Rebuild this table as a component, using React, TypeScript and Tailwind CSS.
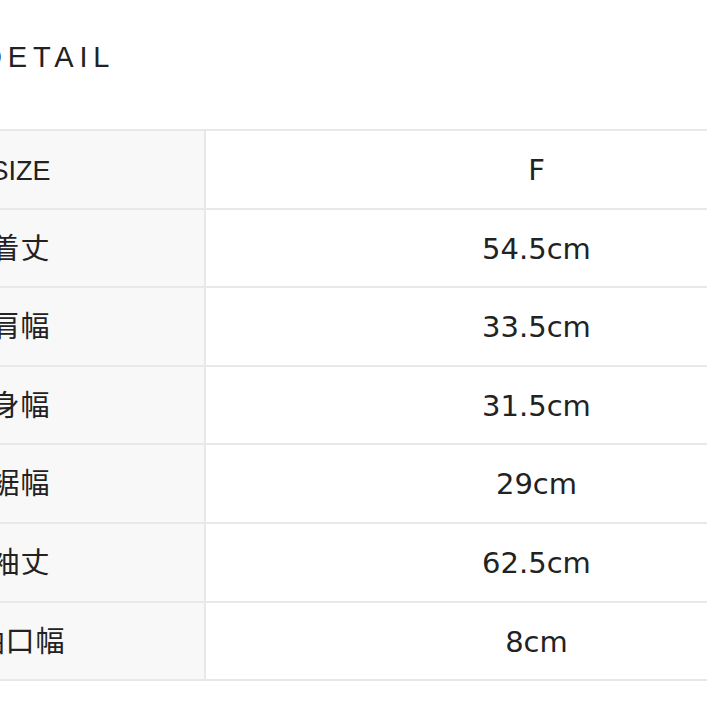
const rows: { label: string; value: string }[] = [
  { label: "SIZE", value: "F" },
  { label: "着丈", value: "54.5cm" },
  { label: "肩幅", value: "33.5cm" },
  { label: "身幅", value: "31.5cm" },
  { label: "裾幅", value: "29cm" },
  { label: "袖丈", value: "62.5cm" },
  { label: "袖口幅", value: "8cm" },
]

export default function App() {
  return (
    <div className="w-[707px] h-[707px] overflow-hidden bg-white text-[#222] font-['Liberation_Sans','Noto_Sans_CJK_JP',sans-serif]">
      <h2 className="pt-[43px] ml-[-19px] text-[29px] leading-none tracking-[0.2em] font-normal whitespace-nowrap">
        DETAIL
      </h2>

      <div className="mt-[57px] ml-[-163px] w-[1030px] border-t-2 border-[#e8e8e8]">
        {rows.map((row, i) => (
          <div key={row.label} className="flex h-[78.6px] border-b-2 border-[#e8e8e8]">
            <div
              className={
                i === 0
                  ? "w-[369px] shrink-0 flex items-center justify-center pt-[3px] bg-[#f8f8f8] border-r-2 border-[#e8e8e8] text-[27px]"
                  : "w-[369px] shrink-0 flex items-center justify-center pt-[3px] bg-[#f8f8f8] border-r-2 border-[#e8e8e8] text-[29px] tracking-[1px]"
              }
            >
              {row.label}
            </div>
            <div className="flex-1 flex items-center justify-center pt-[3px] text-[29px] font-['DejaVu_Sans',sans-serif]">
              {row.value}
            </div>
          </div>
        ))}
      </div>
    </div>
  )
}
